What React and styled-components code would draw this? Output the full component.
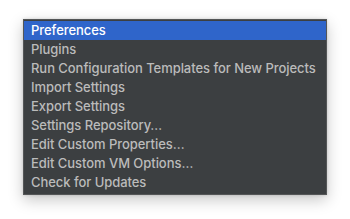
import React from "react";
import styled, { createGlobalStyle } from "styled-components";

const Global = createGlobalStyle`
  html, body { margin: 0; padding: 0; background: #ffffff; }
  body { width: 350px; height: 219px; overflow: hidden; }
`;

const Page = styled.div`
  width: 350px;
  height: 219px;
  padding: 19px 0 0 23px;
  box-sizing: border-box;
`;

const Menu = styled.ul`
  list-style: none;
  margin: 0;
  padding: 1px 0 2px;
  width: 304px;
  box-sizing: border-box;
  background: #3c3f41;
  border: 1px solid #545657;
  box-shadow: 0 5px 14px rgba(0, 0, 0, 0.22), 0 0 3px rgba(0, 0, 0, 0.15);
  font-family: Inter, "Noto Sans", sans-serif;
  font-size: 13px;
  font-weight: 500;
  letter-spacing: -0.05px;
`;

const Item = styled.li`
  height: 19px;
  line-height: 19px;
  padding: 0 7px;
  color: ${(p) => (p.$active ? "#ffffff" : "#bbbbbb")};
  background: ${(p) => (p.$active ? "#2f65ca" : "transparent")};
  white-space: nowrap;
`;

const items = [
  "Preferences",
  "Plugins",
  "Run Configuration Templates for New Projects",
  "Import Settings",
  "Export Settings",
  "Settings Repository…",
  "Edit Custom Properties…",
  "Edit Custom VM Options…",
  "Check for Updates",
];

export default function App() {
  return (
    <>
      <Global />
      <Page>
        <Menu>
          {items.map((t, i) => (
            <Item key={t} $active={i === 0}>
              {t}
            </Item>
          ))}
        </Menu>
      </Page>
    </>
  );
}
